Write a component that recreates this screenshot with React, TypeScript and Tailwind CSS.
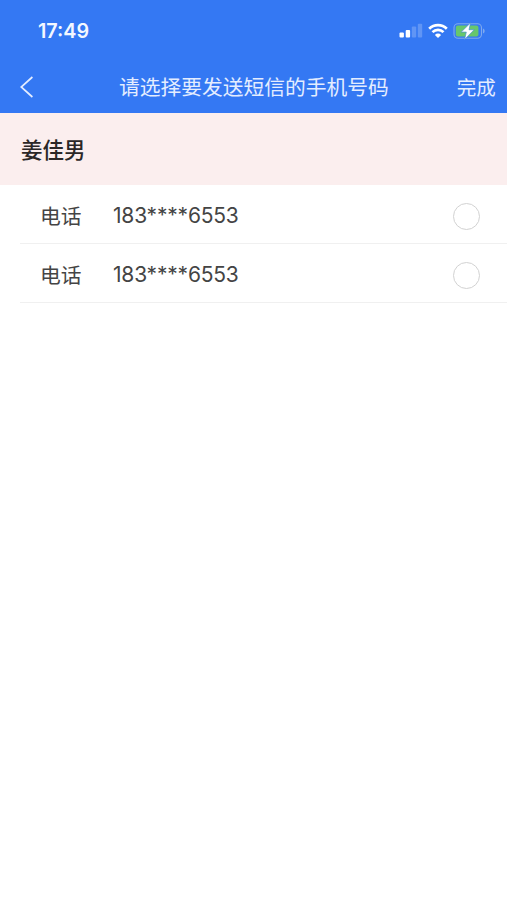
import { useState } from 'react'

interface Phone {
  id: number
  label: string
  number: string
}

const CONTACT = '姜佳男'

const PHONES: Phone[] = [
  { id: 1, label: '电话', number: '183****6553' },
  { id: 2, label: '电话', number: '183****6553' },
]

function SignalIcon() {
  return (
    <svg width="24" height="16" viewBox="0 0 24 16" fill="#fff">
      <rect x="0.5" y="9.6" width="4.4" height="4.9" rx="1" />
      <rect x="6.7" y="7" width="4.4" height="7.5" rx="1" />
      <rect x="12.8" y="3.6" width="4.4" height="10.9" rx="1" opacity="0.22" />
      <rect x="18.8" y="0.8" width="4.4" height="13.7" rx="1" opacity="0.22" />
    </svg>
  )
}

function WifiIcon() {
  return (
    <svg width="20" height="16" viewBox="0 0 20 16" fill="none" stroke="#fff" strokeWidth="2.7">
      <path d="M1.2 5.7a12.5 12.5 0 0 1 17.6 0" />
      <path d="M4.5 9.1a7.8 7.8 0 0 1 11 0" />
      <path d="M10 15.1l-3.1-3.2a4.4 4.4 0 0 1 6.2 0z" fill="#fff" stroke="none" />
    </svg>
  )
}

function BatteryIcon() {
  return (
    <svg width="34" height="18" viewBox="0 0 34 18">
      <rect x="1" y="1.7" width="27.5" height="14.6" rx="4" fill="none" stroke="#7fa9ee" strokeWidth="1.1" />
      <path d="M30 6.5c2.2.7 2.2 4.3 0 5z" fill="#7fa9ee" />
      <rect x="2.8" y="3.5" width="22.6" height="11" rx="2" fill="#67c76c" />
      <path
        d="M17.6 0.8 8.2 10.1h5.1l-1.7 7.3 9.6-9.7H16z"
        fill="#fff"
        stroke="#4a91cf"
        strokeWidth="0.7"
      />
    </svg>
  )
}

function PhoneRow({ phone, checked, onSelect }: { phone: Phone; checked: boolean; onSelect: () => void }) {
  return (
    <button
      onClick={onSelect}
      className="ml-5 flex h-[59px] items-center border-b border-[#f0f0f0] pr-[27px] pl-5 text-left text-[#444]"
    >
      <span className="w-[73px] pt-[6px] text-[20.75px] leading-none">{phone.label}</span>
      <span className="pt-[3px] text-[21px] leading-none tracking-[-0.2px]">{phone.number}</span>
      <span className="mt-1 ml-auto flex size-[27px] items-center justify-center rounded-full border border-[#d2d2d2]">
        {checked && <span className="size-[15px] rounded-full bg-[#3478f3]" />}
      </span>
    </button>
  )
}

export default function App() {
  const [selectedId, setSelectedId] = useState<number | null>(null)

  return (
    <div className="flex h-[900px] w-[507px] flex-col bg-white font-['Inter','Noto_Sans_CJK_SC',sans-serif]">
      <header className="h-[113px] bg-[#3478f3] text-white">
        {/* Status bar */}
        <div className="flex h-[62px] items-center pr-[20px] pl-[38px]">
          <span className="pt-px text-[19.75px] leading-none font-semibold text-[#f3f7ff]">17:49</span>
          <div className="ml-auto flex items-center gap-[5px]">
            <SignalIcon />
            <WifiIcon />
            <BatteryIcon />
          </div>
        </div>

        {/* Navigation bar */}
        <div className="grid h-[50px] grid-cols-[119px_1fr_119px] items-center text-[#e4edff]">
          <button className="pl-5">
            <svg width="14" height="22" viewBox="0 0 14 22" fill="none" stroke="currentColor" strokeWidth="1.7">
              <path d="M12.4 1 1.2 11l11.2 10" />
            </svg>
          </button>
          <h1 className="pt-[2px] text-center text-[20.75px] leading-none whitespace-nowrap">
            请选择要发送短信的手机号码
          </h1>
          <button className="pt-[3px] pr-3 text-right text-[19.5px] leading-none">完成</button>
        </div>
      </header>

      <div className="flex h-[72px] items-center bg-[#fbeeee] pt-[3px] pl-[21px] text-[21.5px] leading-none font-medium text-[#2b2727]">
        {CONTACT}
      </div>

      {PHONES.map((phone) => (
        <PhoneRow
          key={phone.id}
          phone={phone}
          checked={selectedId === phone.id}
          onSelect={() => setSelectedId(phone.id)}
        />
      ))}
    </div>
  )
}
